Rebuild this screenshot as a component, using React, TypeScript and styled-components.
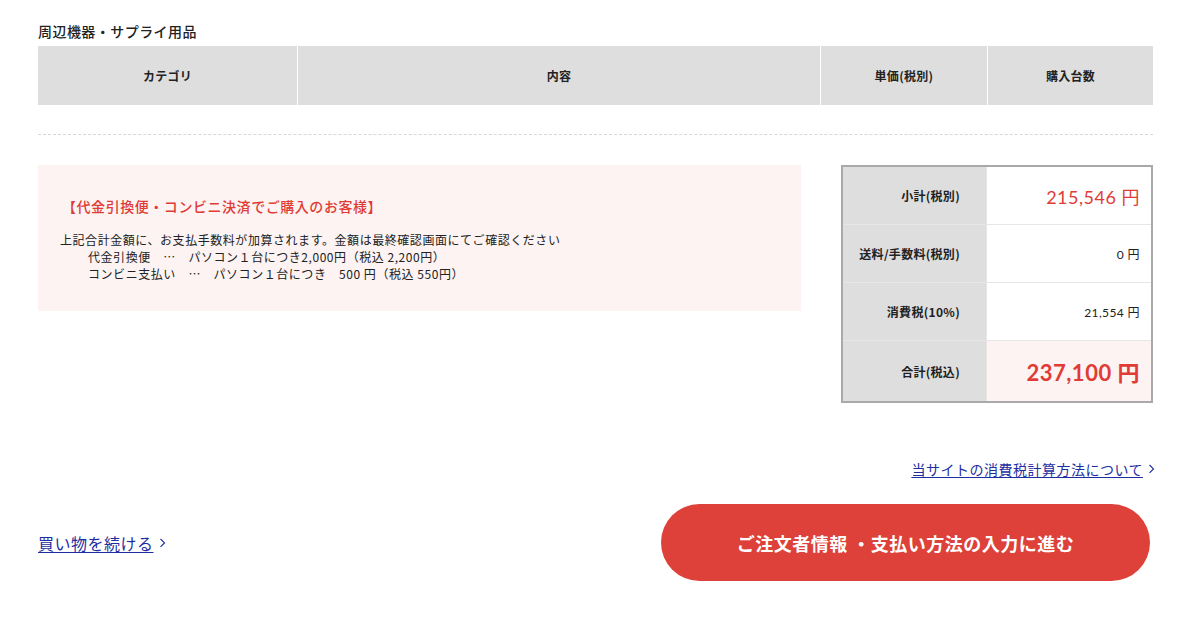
import React from "react";
import styled, { createGlobalStyle } from "styled-components";

const Global = createGlobalStyle`
  html, body { margin: 0; padding: 0; background: #fff; }
  body { font-family: "Noto Sans CJK JP", sans-serif; color: #222; }
`;

const Page = styled.div`
  width: 1115px;
  padding: 22px 0 0 38px;
`;

const Title = styled.h2`
  margin: 0 0 6px;
  font-size: 14px;
  font-weight: 500;
  line-height: 18px;
  letter-spacing: 0.45px;
  color: #222;
`;

const HeaderGrid = styled.div`
  display: grid;
  grid-template-columns: 259px 522px 166px 1fr;
  column-gap: 1px;
  height: 59px;
`;

const HeaderCell = styled.div`
  background: #dedede;
  display: flex;
  align-items: center;
  justify-content: center;
  font-size: 12px;
  font-weight: 700;
  letter-spacing: 0.3px;
  color: #222;
`;

const Dashed = styled.hr`
  margin: 29px 0 0;
  border: 0;
  border-top: 1px dashed #d8d8d8;
  height: 0;
`;

const Main = styled.div`
  display: flex;
  justify-content: space-between;
  align-items: flex-start;
  margin-top: 30px;
`;

const Notice = styled.div`
  width: 763px;
  height: 146px;
  box-sizing: border-box;
  background: #fcf3f2;
  padding: 31px 24px 0 24px;
`;

const NoticeTitle = styled.p`
  margin: 0 0 15px;
  color: #e03c35;
  font-size: 14px;
  line-height: 20px;
  font-weight: 500;
  letter-spacing: 0.55px;
`;

const NoticeLine = styled.p<{ $indent?: boolean }>`
  margin: 0;
  font-size: 12px;
  line-height: 17px;
  letter-spacing: 0.55px;
  white-space: pre;
  padding-left: ${(p) => (p.$indent ? "26px" : "0")};
  margin-left: ${(p) => (p.$indent ? "0" : "-2px")};
`;

const Summary = styled.div`
  width: 312px;
  box-sizing: border-box;
  border: 2px solid #a9a9a9;
  display: grid;
  grid-template-columns: 143px 1fr;
  row-gap: 1px;
  column-gap: 1px;
  background: #e6e6e6;
`;

const Label = styled.div<{ $tall?: boolean }>`
  background: #dedede;
  height: ${(p) => (p.$tall ? "60px" : "57px")};
  display: flex;
  align-items: center;
  justify-content: flex-end;
  padding-right: 26px;
  font-size: 12px;
  font-weight: 700;
  letter-spacing: 0.3px;
`;

const Value = styled.div<{ $tone?: "red" | "total" }>`
  background: ${(p) => (p.$tone === "total" ? "#fcf3f2" : "#fff")};
  display: flex;
  align-items: center;
  justify-content: flex-end;
  padding-right: 11px;
  font-family: "Lato", "Noto Sans CJK JP", sans-serif;
  color: ${(p) => (p.$tone ? "#e03c35" : "#222")};
  font-size: ${(p) => (p.$tone === "total" ? "22px" : p.$tone === "red" ? "18px" : "12px")};
  font-weight: ${(p) => (p.$tone === "total" ? 700 : 400)};
  letter-spacing: ${(p) => (p.$tone ? "0.5px" : "0.4px")};
`;

const TaxLinkRow = styled.div`
  display: flex;
  justify-content: flex-end;
  margin-top: 56px;
  margin-right: -2px;
`;

const Link = styled.a<{ $size: number }>`
  color: #1e2ea0;
  font-size: ${(p) => p.$size}px;
  letter-spacing: 0.5px;
  text-decoration: underline;
  text-underline-offset: 2px;
  display: inline-flex;
  align-items: center;
  gap: 5px;
  cursor: pointer;
`;

const Chevron = styled.span`
  display: inline-flex;
  align-items: center;
`;

const Bottom = styled.div`
  display: flex;
  justify-content: space-between;
  align-items: center;
  margin-top: 25px;
`;

const Cta = styled.button`
  width: 489px;
  height: 77px;
  margin-right: 3px;
  border: 0;
  border-radius: 40px;
  background: #dd4139;
  color: #fff;
  font-family: "Noto Sans CJK JP", sans-serif;
  font-size: 18px;
  font-weight: 700;
  letter-spacing: 0.5px;
  cursor: pointer;
`;

const ChevronIcon = ({ size }: { size: number }) => (
  <svg width={size * 0.5} height={size * 0.7} viewBox="0 0 6 10">
    <path d="M1 1l4 4-4 4" fill="none" stroke="#1e2ea0" strokeWidth="1.2" />
  </svg>
);

export default function App() {
  return (
    <>
      <Global />
      <Page>
        <Title>周辺機器・サプライ用品</Title>
        <HeaderGrid>
          <HeaderCell>カテゴリ</HeaderCell>
          <HeaderCell>内容</HeaderCell>
          <HeaderCell>単価(税別)</HeaderCell>
          <HeaderCell>購入台数</HeaderCell>
        </HeaderGrid>
        <Dashed />
        <Main>
          <Notice>
            <NoticeTitle>【代金引換便・コンビニ決済でご購入のお客様】</NoticeTitle>
            <NoticeLine>上記合計金額に、お支払手数料が加算されます。金額は最終確認画面にてご確認ください</NoticeLine>
            <NoticeLine $indent>{"代金引換便　…　パソコン１台につき2,000円（税込 2,200円）"}</NoticeLine>
            <NoticeLine $indent>{"コンビニ支払い　…　パソコン１台につき　500 円（税込 550円）"}</NoticeLine>
          </Notice>
          <Summary>
            <Label>小計(税別)</Label>
            <Value $tone="red">215,546 円</Value>
            <Label>送料/手数料(税別)</Label>
            <Value>0 円</Value>
            <Label>消費税(10%)</Label>
            <Value>21,554 円</Value>
            <Label $tall>合計(税込)</Label>
            <Value $tone="total">237,100 円</Value>
          </Summary>
        </Main>
        <TaxLinkRow>
          <Link $size={14}>
            当サイトの消費税計算方法について
            <Chevron><ChevronIcon size={14} /></Chevron>
          </Link>
        </TaxLinkRow>
        <Bottom>
          <Link $size={16}>
            買い物を続ける
            <Chevron><ChevronIcon size={14} /></Chevron>
          </Link>
          <Cta>ご注文者情報 ・支払い方法の入力に進む</Cta>
        </Bottom>
      </Page>
    </>
  );
}
